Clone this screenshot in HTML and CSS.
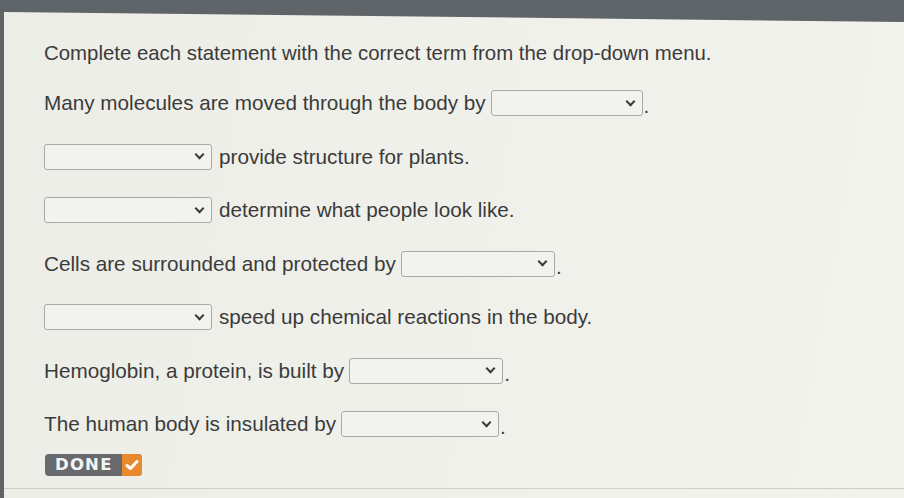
FILE: index.html
```html
<!DOCTYPE html>
<html lang="en">
<head>
  <meta charset="UTF-8">
  <meta name="viewport" content="width=device-width, initial-scale=1.0">
  <title>Drop-down Activity</title>
  <link rel="stylesheet" href="styles.css">
</head>
<body>

  <div class="screen">
    <div class="activity">
      <p class="prompt">Complete each statement with the correct term from the drop-down menu.</p>

      <div class="row">
        <span>Many molecules are moved through the body by</span>
        <span class="blank"><span class="select w-152"><span class="caret"></span></span>.</span>
      </div>

      <div class="row lead">
        <span class="select w-168"><span class="caret"></span></span>
        <span>provide structure for plants.</span>
      </div>

      <div class="row lead">
        <span class="select w-168"><span class="caret"></span></span>
        <span>determine what people look like.</span>
      </div>

      <div class="row">
        <span>Cells are surrounded and protected by</span>
        <span class="blank"><span class="select w-154"><span class="caret"></span></span>.</span>
      </div>

      <div class="row lead">
        <span class="select w-168"><span class="caret"></span></span>
        <span>speed up chemical reactions in the body.</span>
      </div>

      <div class="row">
        <span>Hemoglobin, a protein, is built by</span>
        <span class="blank"><span class="select w-154"><span class="caret"></span></span>.</span>
      </div>

      <div class="row">
        <span>The human body is insulated by</span>
        <span class="blank"><span class="select w-158"><span class="caret"></span></span>.</span>
      </div>

      <div class="actions">
        <button class="done-btn">
          <span class="done-label">DONE</span>
          <span class="done-check">
            <svg width="14" height="12" viewBox="0 0 14 12">
              <path d="M2 6.5 L5.5 9.5 L12 2.5" fill="none" stroke="#fff" stroke-width="3" stroke-linecap="round" stroke-linejoin="round"/>
            </svg>
          </span>
        </button>
      </div>
    </div>
    <div class="bottom-rule"></div>
  </div>

</body>
</html>
```

FILE: styles.css
```css
* {
  box-sizing: border-box;
}

html, body {
  height: 100%;
}

body {
  margin: 0;
  background-color: #5f6469;
  font-family: 'Liberation Sans', Arial, sans-serif;
  overflow: hidden;
}

/* page area under the dark monitor bezel */
.screen {
  margin-left: 4px;
  height: 100%;
  padding-top: 12px;
  background: linear-gradient(100deg, #ededE7 0%, #f1f1eb 60%, #f3f3ee 100%);
  clip-path: polygon(0 12px, 100% 22px, 100% 100%, 0 100%);
  display: flex;
  flex-direction: column;
}

.activity {
  padding: 29px 0 0 40px;
  color: #3b3b3b;
  font-size: 20.7px;
  display: flex;
  flex-direction: column;
  flex: 1;
}

.prompt {
  margin: 0;
  font-size: 20.4px;
  line-height: 24px;
  height: 35.5px;
}

.row {
  display: flex;
  align-items: center;
  height: 53.5px;
  gap: 5px;
}

.row.lead {
  gap: 7px;
}

/* drop-down with the full stop that follows it */
.blank {
  display: inline-flex;
  align-items: flex-end;
  gap: 1px;
  line-height: 20px;
}

/* empty drop-down box */
.select {
  display: inline-flex;
  align-items: center;
  justify-content: flex-end;
  height: 26px;
  border: 1px solid #a9a9a6;
  border-radius: 3px;
  background-color: #f2f2ee;
  padding-right: 8px;
}

.w-152 { width: 152px; }
.w-154 { width: 154px; }
.w-158 { width: 158px; }
.w-168 { width: 168px; }

.caret {
  width: 7px;
  height: 7px;
  border-right: 2px solid #3a3a3a;
  border-bottom: 2px solid #3a3a3a;
  transform: rotate(45deg);
  margin-top: -4px;
}

.actions {
  padding-top: 0;
  height: 30px;
}

.done-btn {
  display: inline-flex;
  align-items: stretch;
  height: 22px;
  margin-left: 1px;
  padding: 0;
  border: none;
  border-radius: 4px;
  overflow: hidden;
  background-color: #67696c;
  cursor: pointer;
}

.done-label {
  display: flex;
  align-items: center;
  padding: 0 9px 0 10px;
  color: #f4f4f4;
  font-family: 'DejaVu Sans', sans-serif;
  font-weight: bold;
  font-size: 16.5px;
  letter-spacing: 1.2px;
}

.done-check {
  display: flex;
  align-items: center;
  justify-content: center;
  width: 20px;
  background-color: #e8892e;
}

.bottom-rule {
  height: 10px;
  border-top: 1px solid #cfcfc8;
}
```
